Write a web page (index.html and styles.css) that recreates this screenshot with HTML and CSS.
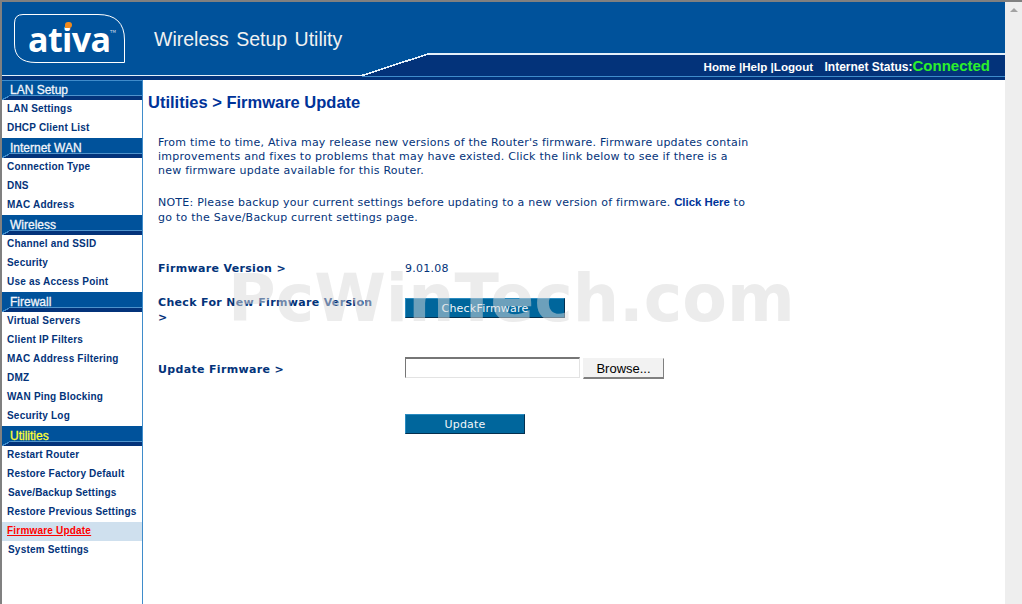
FILE: index.html
```html
<!DOCTYPE html>
<html lang="en">

<head>
    <meta charset="UTF-8">
    <title>Firmware Update</title>
    <link rel="stylesheet" href="styles.css">
</head>

<body>
    <div class="page">
        <div class="main">
            <div class="header">
                <svg class="header-art" width="1003" height="78" viewBox="0 0 1003 78" shape-rendering="crispEdges">
                    <path d="M0 74 H360 L426 52 H1003 V78 H0 Z" fill="#03337a"/>
                    <path d="M360 74.5 H1003" stroke="#3f8ccb" stroke-width="1" fill="none"/>
                    <path d="M0 73.5 H360 L426 52 H1003" stroke="#e4f0fa" stroke-width="1.6" fill="none"/>
                </svg>
                <div class="logo">
                    <svg class="logo-frame" width="114" height="52" viewBox="0 0 114 52">
                        <path d="M0.5 9 Q0.5 0.5 9 0.5 H84 Q110.5 0.5 110.5 26 V48.5 H22 Q0.5 48.5 0.5 30 Z" fill="none" stroke="#fff" stroke-width="1"/>
                    </svg>
                    <span class="logo-text">ativa</span><span class="logo-tm">TM</span>
                    <span class="logo-dot"></span>
                </div>
                <div class="title">Wireless Setup Utility</div>
                <div class="top-links">
                    <span class="nav"><a href="#">Home</a> |<a href="#">Help</a> |<a href="#">Logout</a></span>
                    <span class="status">Internet Status:<b>Connected</b></span>
                </div>
            </div>
            <div class="columns">
                <div class="sidebar">
                    <div class="side-head first-head">LAN Setup</div>
                    <a class="side-link" href="#">LAN Settings</a>
                    <a class="side-link" href="#">DHCP Client List</a>
                    <div class="side-head">Internet WAN</div>
                    <a class="side-link" href="#">Connection Type</a>
                    <a class="side-link" href="#">DNS</a>
                    <a class="side-link" href="#">MAC Address</a>
                    <div class="side-head">Wireless</div>
                    <a class="side-link" href="#">Channel and SSID</a>
                    <a class="side-link" href="#">Security</a>
                    <a class="side-link" href="#">Use as Access Point</a>
                    <div class="side-head">Firewall</div>
                    <a class="side-link" href="#">Virtual Servers</a>
                    <a class="side-link" href="#">Client IP Filters</a>
                    <a class="side-link" href="#">MAC Address Filtering</a>
                    <a class="side-link" href="#">DMZ</a>
                    <a class="side-link" href="#">WAN Ping Blocking</a>
                    <a class="side-link" href="#">Security Log</a>
                    <div class="side-head active-head">Utilities</div>
                    <a class="side-link" href="#">Restart Router</a>
                    <a class="side-link" href="#">Restore Factory Default</a>
                    <a class="side-link indent" href="#">Save/Backup Settings</a>
                    <a class="side-link" href="#">Restore Previous Settings</a>
                    <a class="side-link current" href="#">Firmware Update</a>
                    <a class="side-link indent" href="#">System Settings</a>
                </div>
                <div class="content">
                    <h1>Utilities &gt; Firmware Update</h1>
                    <p class="intro">From time to time, Ativa may release new versions of the Router's firmware. Firmware updates contain<br>improvements and fixes to problems that may have existed. Click the link below to see if there is a<br>new firmware update available for this Router.</p>
                    <p class="note">NOTE: Please backup your current settings before updating to a new version of firmware. <a href="#">Click Here</a> to<br>go to the Save/Backup current settings page.</p>
                    <div class="row row-version">
                        <div class="label">Firmware Version &gt;</div>
                        <div class="value">9.01.08</div>
                    </div>
                    <div class="row row-check">
                        <div class="label">Check For New Firmware Version &gt;</div>
                        <input class="btn btn-check" type="button" value="CheckFirmware">
                    </div>
                    <div class="row row-update">
                        <div class="label">Update Firmware &gt;</div>
                        <div class="file-box"></div>
                        <button class="browse" type="button">Browse...</button>
                    </div>
                    <div class="row row-submit">
                        <div class="label"></div>
                        <input class="btn btn-update" type="button" value="Update">
                    </div>
                </div>
            </div>
        </div>
        <div class="scrollbar"><span class="arrow"></span></div>
    </div>
    <div class="watermark">PcWinTech.com</div>
</body>

</html>
```

FILE: styles.css
```css
html, body {
    margin: 0;
    padding: 0;
    height: 100%;
    overflow: hidden;
}

body {
    font-family: "DejaVu Sans", Verdana, sans-serif;
    background-color: #fff;
}

.page {
    display: flex;
    width: 1022px;
    height: 604px;
    box-sizing: border-box;
    border-top: 2px solid #808080;
    border-left: 2px solid #808080;
}

.main {
    width: 1003px;
    display: flex;
    flex-direction: column;
}

.scrollbar {
    width: 17px;
    background-color: #eeeeee;
    display: flex;
    justify-content: center;
    padding-top: 6px;
    box-sizing: border-box;
}

.arrow {
    width: 0;
    height: 0;
    border-left: 4px solid transparent;
    border-right: 4px solid transparent;
    border-bottom: 4px solid #a3a3a3;
}

/* header */
.header {
    position: relative;
    height: 78px;
    flex: none;
    background-color: #00529b;
}

.header-art {
    position: absolute;
    left: 0;
    top: 0;
}

.logo {
    position: absolute;
    left: 12px;
    top: 12px;
    width: 114px;
    height: 52px;
}

.logo-frame {
    position: absolute;
    left: 0;
    top: 0;
}

.logo-text {
    position: absolute;
    left: 14px;
    top: 5px;
    font-family: "Open Sans", sans-serif;
    font-weight: 700;
    font-size: 34px;
    line-height: 40px;
    letter-spacing: -0.6px;
    color: #fff;
}

.logo-tm {
    position: absolute;
    left: 96px;
    top: 15px;
    font-size: 4px;
    line-height: 5px;
    color: #cfdcea;
}

.logo-dot {
    position: absolute;
    left: 51px;
    top: 8px;
    width: 7px;
    height: 6px;
    border-radius: 4px 4px 4px 0;
    background-color: #f08a1d;
}

.title {
    position: absolute;
    left: 152px;
    top: 25px;
    font-family: "Liberation Sans", Arial, sans-serif;
    font-size: 19.5px;
    line-height: 24px;
    word-spacing: 2px;
    color: #f1f1f1;
}

.top-links {
    position: absolute;
    right: 15px;
    top: 56px;
    font-family: "Liberation Sans", Arial, sans-serif;
    font-weight: bold;
    font-size: 12px;
    line-height: 16px;
    color: #fff;
    white-space: nowrap;
}

.top-links a {
    color: #fff;
    text-decoration: none;
}

.nav {
    font-size: 11.6px;
}

.status {
    margin-left: 8px;
}

.status b {
    font-size: 15px;
    color: #2bf02b;
}

/* sidebar */
.columns {
    display: flex;
    flex: 1;
}

.sidebar {
    width: 140px;
    flex: none;
    border-right: 1px solid #3f8ccb;
    display: flex;
    flex-direction: column;
}

.side-head {
    position: relative;
    height: 20px;
    flex: none;
    box-sizing: border-box;
    padding-left: 8px;
    background: linear-gradient(#00529b 15px, #4f93cc 15px, #4f93cc 16px, #03337a 16px);
    font-family: "Liberation Sans", Arial, sans-serif;
    font-size: 12px;
    line-height: 21px;
    color: #f2f5fa;
    -webkit-text-stroke: 0.3px currentColor;
}

.side-head::before {
    content: "";
    position: absolute;
    left: 0;
    bottom: 0;
    width: 9px;
    height: 5px;
    background: linear-gradient(to bottom right, #00529b 42%, #3f8ccb 42%, #3f8ccb 56%, #03337a 56%);
}

.first-head {
    border-top: 1px solid #3f8ccb;
    background: linear-gradient(#00529b 14px, #4f93cc 14px, #4f93cc 15px, #03337a 15px);
    line-height: 19px;
}

.active-head {
    color: #ffff33;
}

.side-link {
    display: block;
    height: 19px;
    flex: none;
    padding-left: 5px;
    font-family: "Liberation Sans", Arial, sans-serif;
    font-weight: bold;
    font-size: 10px;
    letter-spacing: 0.2px;
    line-height: 17px;
    color: #03337a;
    text-decoration: none;
}

.side-link.indent {
    padding-left: 6px;
}

.side-link.current {
    background-color: #cfe0ee;
    color: #ff0000;
    text-decoration: underline;
}

/* content */
.content {
    flex: 1;
    padding-left: 5px;
    color: #03337a;
    font-size: 11px;
    line-height: 14px;
    letter-spacing: 0.24px;
}

h1 {
    margin: 13px 0 24px;
    font-family: "Liberation Sans", Arial, sans-serif;
    font-size: 16.5px;
    line-height: 19px;
    letter-spacing: 0;
    color: #003399;
}

.intro,
.note {
    margin: 0 0 17px 10px;
    white-space: nowrap;
}

.note {
    line-height: 15px;
}

.note a {
    font-family: "Liberation Sans", Arial, sans-serif;
    font-size: 11.4px;
    letter-spacing: 0;
    color: #003399;
    font-weight: bold;
    text-decoration: none;
}

.row {
    display: flex;
    margin-left: 10px;
}

.label {
    width: 225px;
    padding-right: 22px;
    flex: none;
    font-weight: bold;
    letter-spacing: 0.33px;
    color: #03337a;
}

.row-version {
    margin-top: 37px;
}

.row-check {
    margin-top: 19px;
}

.row-check .label {
    line-height: 15px;
}

.row-check .btn {
    margin-top: 3px;
}

.row-update {
    margin-top: 32px;
}

.row-update .label {
    margin-top: 6px;
}

.row-submit {
    margin-top: 35px;
}

.btn {
    height: 20px;
    padding: 0;
    background-color: #00669c;
    border: 1px solid;
    border-color: #2a8bc0 #04304f #04304f #2a8bc0;
    color: #f2f6fa;
    font-family: "DejaVu Sans", Verdana, sans-serif;
    font-size: 11px;
    letter-spacing: 0.2px;
}

.btn-check {
    width: 160px;
}

.btn-update {
    width: 120px;
}

.file-box {
    width: 175px;
    height: 21px;
    box-sizing: border-box;
    border-style: solid;
    border-width: 2px 1px 1px 1px;
    border-color: #767676 #e3e3e3 #e3e3e3 #767676;
    background-color: #fff;
}

.browse {
    width: 81px;
    height: 21px;
    margin: 1px 0 0 3px;
    padding: 0;
    background-color: #f2f2f2;
    border-style: solid;
    border-width: 1px 1px 2px 1px;
    border-color: #f2f2f2 #808080 #808080 #f2f2f2;
    font-family: "Liberation Sans", Arial, sans-serif;
    font-size: 13px;
    color: #000;
}

.watermark {
    position: absolute;
    left: 228px;
    top: 265px;
    font-family: "DejaVu Sans", sans-serif;
    font-weight: bold;
    font-size: 65px;
    line-height: 68px;
    white-space: nowrap;
    color: rgba(218, 218, 218, 0.5);
    pointer-events: none;
}
```
